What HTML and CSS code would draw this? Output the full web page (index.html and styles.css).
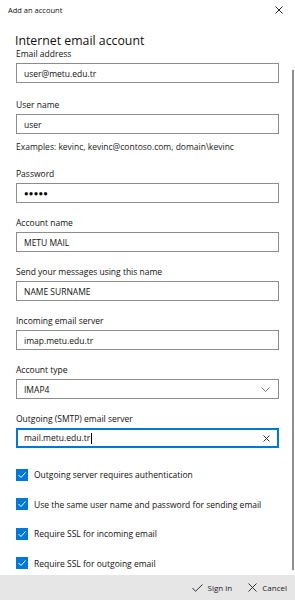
FILE: index.html
```html
<!DOCTYPE html>
<html lang="en">
<head>
    <meta charset="UTF-8">
    <meta name="viewport" content="width=device-width, initial-scale=1.0">
    <title>Add an account</title>
    <link rel="stylesheet" href="styles.css">
</head>
<body>
    <div id="dialog">
        <div class="titlebar">
            <span class="title">Add an account</span>
            <svg class="close" width="8" height="8" viewBox="0 0 8 8"><path d="M0.5 0.5 L7.5 7.5 M7.5 0.5 L0.5 7.5" stroke="#222" stroke-width="1" fill="none"/></svg>
        </div>

        <div class="body">
            <div class="content">
                <h1>Internet email account</h1>

                <div class="field first">
                    <div class="label">Email address</div>
                    <div class="box">user@metu.edu.tr</div>
                </div>

                <div class="field">
                    <div class="label">User name</div>
                    <div class="box">user</div>
                    <div class="hint">Examples: kevinc, kevinc@contoso.com, domain\kevinc</div>
                </div>

                <div class="field">
                    <div class="label">Password</div>
                    <div class="box dots"><span>&#9679;&#9679;&#9679;&#9679;&#9679;</span></div>
                </div>

                <div class="field">
                    <div class="label">Account name</div>
                    <div class="box">METU MAIL</div>
                </div>

                <div class="field">
                    <div class="label">Send your messages using this name</div>
                    <div class="box">NAME SURNAME</div>
                </div>

                <div class="field">
                    <div class="label">Incoming email server</div>
                    <div class="box">imap.metu.edu.tr</div>
                </div>

                <div class="field">
                    <div class="label">Account type</div>
                    <div class="box select">
                        <span>IMAP4</span>
                        <svg width="9" height="5" viewBox="0 0 9 5"><polyline points="0.5,0.5 4.5,4.5 8.5,0.5" stroke="#777" stroke-width="1" fill="none"/></svg>
                    </div>
                </div>

                <div class="field last">
                    <div class="label">Outgoing (SMTP) email server</div>
                    <div class="box focused">
                        <span>mail.metu.edu.tr<i class="caret"></i></span>
                        <svg width="7" height="7" viewBox="0 0 7 7"><path d="M0.5 0.5 L6.5 6.5 M6.5 0.5 L0.5 6.5" stroke="#333" stroke-width="1" fill="none"/></svg>
                    </div>
                </div>

                <div class="checks">
                    <div class="check">
                        <svg class="tick" width="12" height="12" viewBox="0 0 12 12"><rect width="12" height="12" fill="#0078d7"/><polyline points="2.5,6 5,8.5 9.5,3.5" stroke="#fff" stroke-width="1" fill="none"/></svg>
                        <span>Outgoing server requires authentication</span>
                    </div>
                    <div class="check">
                        <svg class="tick" width="12" height="12" viewBox="0 0 12 12"><rect width="12" height="12" fill="#0078d7"/><polyline points="2.5,6 5,8.5 9.5,3.5" stroke="#fff" stroke-width="1" fill="none"/></svg>
                        <span>Use the same user name and password for sending email</span>
                    </div>
                    <div class="check">
                        <svg class="tick" width="12" height="12" viewBox="0 0 12 12"><rect width="12" height="12" fill="#0078d7"/><polyline points="2.5,6 5,8.5 9.5,3.5" stroke="#fff" stroke-width="1" fill="none"/></svg>
                        <span>Require SSL for incoming email</span>
                    </div>
                    <div class="check">
                        <svg class="tick" width="12" height="12" viewBox="0 0 12 12"><rect width="12" height="12" fill="#0078d7"/><polyline points="2.5,6 5,8.5 9.5,3.5" stroke="#fff" stroke-width="1" fill="none"/></svg>
                        <span>Require SSL for outgoing email</span>
                    </div>
                </div>
            </div>
            <div class="scrollbar"></div>
        </div>

        <div class="footer">
            <div class="action">
                <svg width="11" height="8" viewBox="0 0 11 8"><polyline points="0.5,4 3.5,7.3 10.5,0.5" stroke="#333" stroke-width="1" fill="none"/></svg>
                <span>Sign in</span>
            </div>
            <div class="action">
                <svg width="9" height="9" viewBox="0 0 9 9"><path d="M0.5 0.5 L8.5 8.5 M8.5 0.5 L0.5 8.5" stroke="#333" stroke-width="1" fill="none"/></svg>
                <span>Cancel</span>
            </div>
        </div>
    </div>
</body>
</html>
```

FILE: styles.css
```css
* {
    margin: 0;
    padding: 0;
    box-sizing: border-box;
}

body {
    font-family: "Open Sans", "Noto Sans", sans-serif;
    background: #fff;
    color: #000;
    overflow: hidden;
}

#dialog {
    width: 295px;
    height: 600px;
    display: flex;
    flex-direction: column;
}

.titlebar {
    height: 20px;
    display: flex;
    align-items: center;
    justify-content: space-between;
    padding: 0 12px 0 8px;
    flex-shrink: 0;
}

.title {
    font-size: 7.5px;
    color: #111;
}

.body {
    position: relative;
    flex: 1;
    overflow: hidden;
}

.content {
    padding: 0 16px;
}

h1 {
    font-size: 12.3px;
    font-weight: 400;
    line-height: 14px;
    margin: 14px 0 -1px -1px;
    color: #111;
}

.field {
    margin-bottom: 13px;
}

.field.first {
    margin-bottom: 15px;
}

.field.last {
    margin-bottom: 0;
}

.label {
    font-size: 8.5px;
    line-height: 14px;
    margin-bottom: 2px;
    color: #111;
}

.box {
    width: 263px;
    height: 20px;
    border: 1px solid #8c8c8c;
    padding: 0 8px 0 7px;
    font-size: 8.5px;
    display: flex;
    align-items: center;
    justify-content: space-between;
    color: #111;
}

.box.dots {
    font-size: 7.5px;
    letter-spacing: 0.3px;
    color: #000;
}

.box.focused {
    border: 2px solid #0078d7;
    padding: 0 7px 0 6px;
}

.caret {
    display: inline-block;
    width: 1px;
    height: 11px;
    background: #000;
    vertical-align: middle;
    margin-left: 1px;
}

.hint {
    font-size: 8.5px;
    line-height: 14px;
    margin-top: 6px;
    color: #222;
}

.checks {
    margin-top: 12px;
}

.check {
    height: 29.5px;
    display: flex;
    align-items: center;
    gap: 6px;
    font-size: 8.5px;
    color: #111;
}

.tick {
    flex-shrink: 0;
}

.scrollbar {
    position: absolute;
    right: 1px;
    top: 50px;
    width: 2px;
    height: 500px;
    background: #8e8e8e;
}

.footer {
    height: 25px;
    flex-shrink: 0;
    background: #e6e6e6;
    display: flex;
    justify-content: flex-end;
    align-items: center;
    gap: 16px;
    padding-right: 8px;
}

.action {
    display: flex;
    align-items: center;
    gap: 5px;
    font-size: 8px;
    color: #222;
}
```
